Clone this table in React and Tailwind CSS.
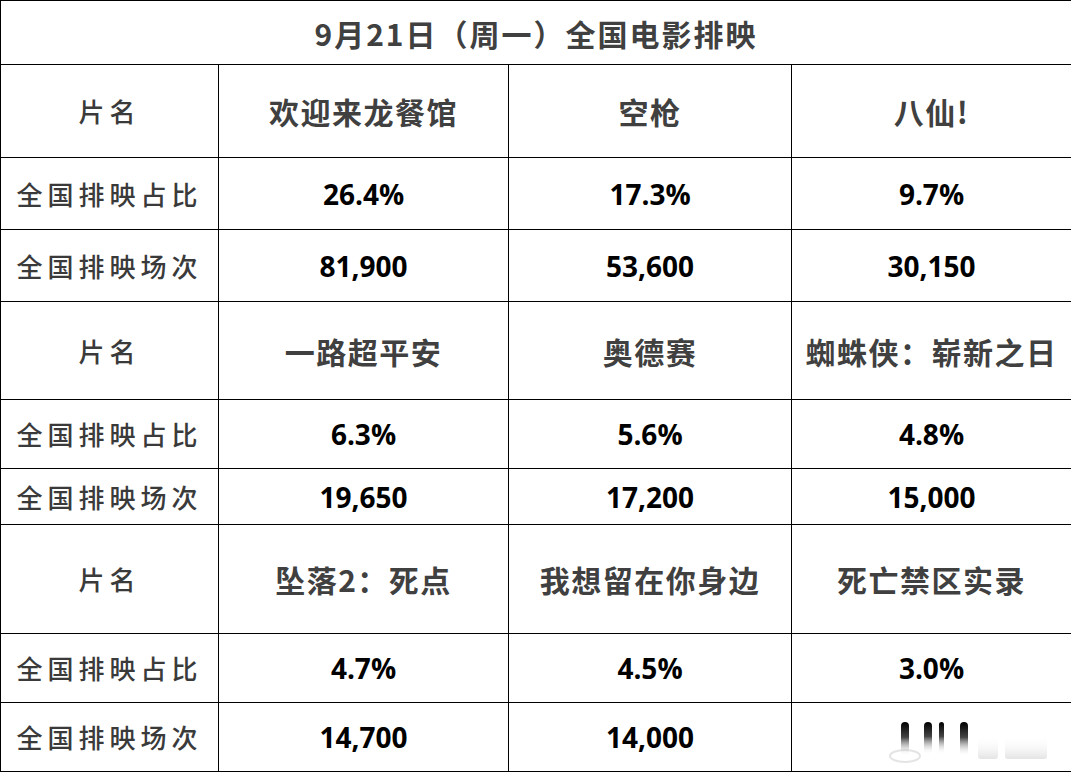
import React from "react";

const cjk = { fontFamily: '"Noto Sans CJK SC", "Noto Sans", sans-serif' };
const num = { fontFamily: '"Open Sans", "Noto Sans CJK SC", sans-serif' };

const blocks = [
  {
    heights: ["h-[93px]", "h-[72px]", "h-[72px]"],
    names: ["欢迎来龙餐馆", "空枪", "八仙!"],
    share: ["26.4%", "17.3%", "9.7%"],
    shows: ["81,900", "53,600", "30,150"],
  },
  {
    heights: ["h-[98px]", "h-[69px]", "h-[56px]"],
    names: ["一路超平安", "奥德赛", "蜘蛛侠：崭新之日"],
    share: ["6.3%", "5.6%", "4.8%"],
    shows: ["19,650", "17,200", "15,000"],
  },
  {
    heights: ["h-[109px]", "h-[69px]", "h-[69px]"],
    names: ["坠落2：死点", "我想留在你身边", "死亡禁区实录"],
    share: ["4.7%", "4.5%", "3.0%"],
    shows: ["14,700", "14,000", ""],
  },
];

function Label({ children, h }) {
  return (
    <div
      className={`${h} flex items-center justify-center border-r border-b border-black text-[26px] font-medium leading-none tracking-[5px] text-[#3a3a3a]`}
      style={cjk}
    >
      {children}
    </div>
  );
}

function Name({ children, h }) {
  return (
    <div
      className={`${h} flex items-center justify-center border-r border-b border-black text-[30px] font-bold leading-none tracking-[1.5px] text-[#404040]`}
      style={cjk}
    >
      {children}
    </div>
  );
}

function Num({ children, h }) {
  return (
    <div
      className={`${h} flex items-center justify-center border-r border-b border-black text-[28px] font-bold leading-none text-black`}
      style={num}
    >
      {children}
    </div>
  );
}

function Watermark() {
  return (
    <svg
      className="absolute right-[18px] bottom-[4px]"
      width="170"
      height="52"
      viewBox="0 0 170 52"
    >
      <defs>
        <linearGradient id="wm" x1="0" y1="0" x2="0" y2="1">
          <stop offset="0" stopColor="#000" />
          <stop offset="0.45" stopColor="#444" />
          <stop offset="1" stopColor="#fff" stopOpacity="0" />
        </linearGradient>
        <linearGradient id="wm2" x1="0" y1="0" x2="0" y2="1">
          <stop offset="0" stopColor="#fff" stopOpacity="0" />
          <stop offset="1" stopColor="#ddd" stopOpacity="0.8" />
        </linearGradient>
      </defs>
      <ellipse cx="22" cy="41" rx="15" ry="6" fill="none" stroke="#e4e4e4" strokeWidth="2" />
      <rect x="18" y="7" width="8" height="34" rx="4" fill="url(#wm)" />
      <rect x="41" y="7" width="8" height="32" rx="4" fill="url(#wm)" />
      <rect x="56" y="7" width="5" height="32" rx="2.5" fill="url(#wm)" />
      <rect x="77" y="7" width="8" height="34" rx="4" fill="url(#wm)" />
      <rect x="95" y="20" width="20" height="24" rx="3" fill="url(#wm2)" />
      <rect x="122" y="20" width="42" height="24" rx="3" fill="url(#wm2)" />
    </svg>
  );
}

export default function App() {
  return (
    <div className="w-[1071px] h-[772px] bg-white">
      <div className="grid grid-cols-[218px_290px_283px_280px] border-t border-l border-black">
        <div
          className="col-span-4 h-[64px] flex items-center justify-center border-r border-b border-black text-[30px] font-bold leading-none tracking-[2px] text-[#404040]"
          style={cjk}
        >
          9月21日（周一）全国电影排映
        </div>
        {blocks.map((b, bi) => (
          <React.Fragment key={bi}>
            <Label h={b.heights[0]}>片名</Label>
            {b.names.map((n) => (
              <Name key={n} h={b.heights[0]}>
                {n}
              </Name>
            ))}
            <Label h={b.heights[1]}>全国排映占比</Label>
            {b.share.map((s) => (
              <Num key={s} h={b.heights[1]}>
                {s}
              </Num>
            ))}
            <Label h={b.heights[2]}>全国排映场次</Label>
            {b.shows.map((s, i) =>
              s ? (
                <Num key={i} h={b.heights[2]}>
                  {s}
                </Num>
              ) : (
                <div
                  key={i}
                  className={`${b.heights[2]} relative border-r border-b border-black`}
                >
                  <Watermark />
                </div>
              )
            )}
          </React.Fragment>
        ))}
      </div>
    </div>
  );
}
